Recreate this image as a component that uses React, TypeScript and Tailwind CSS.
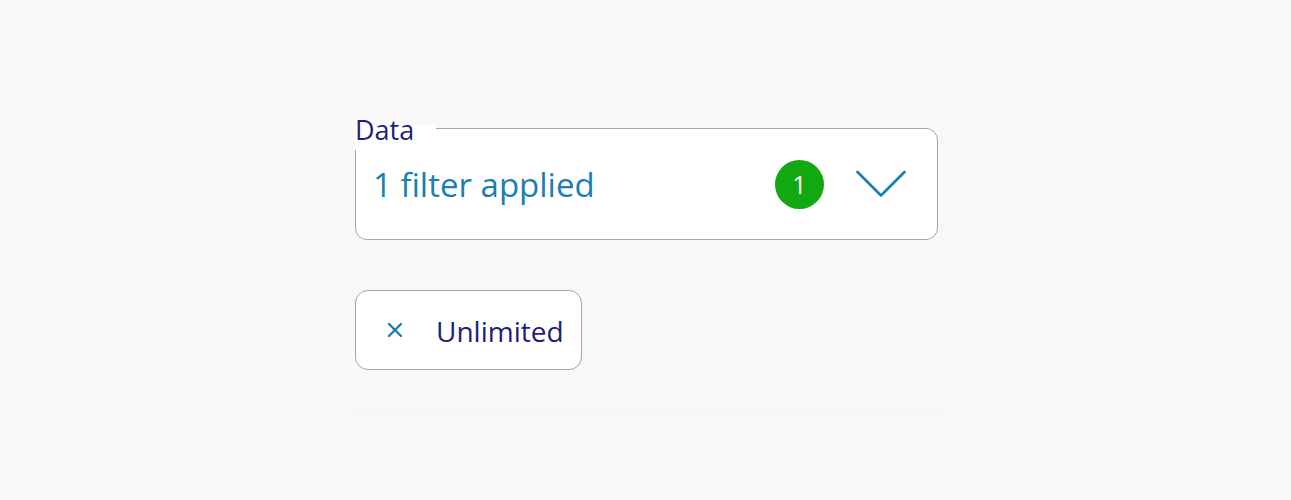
import React from "react";

export default function App() {
  return (
    <div className="min-h-[500px] w-full bg-[#f8f8f8] pt-[128px] pl-[355px]" style={{ fontFamily: '"Open Sans", "Noto Sans", sans-serif' }}>
      <div className="flex w-[590px] flex-col pb-[40px] shadow-[0_3px_3px_rgba(0,0,0,0.01)] -ml-[5px] pl-[5px]">
        <div className="relative flex h-[112px] w-[583px] items-center rounded-[12px] border border-[#a4a4a4] bg-white pl-[17px] pr-[31px]">
          <div className="absolute left-[-1px] top-[-4px] h-[25px] w-[81px] bg-white" />
          <span className="absolute left-[-1px] top-[-13px] text-[27px] leading-[27px] text-[#1d1d7c]">Data</span>
          <span className="flex-1 text-[33px] leading-[33px] text-[#1b7fb0]">1 filter applied</span>
          <div className="flex h-[49px] w-[49px] items-center justify-center rounded-full bg-[#12a812] text-[25px] leading-none text-white">1</div>
          <svg className="ml-[32px]" width="50" height="28" viewBox="0 0 50 28" fill="none">
            <polyline points="1.5,2 25,25.5 48.5,2" stroke="#1b7fb0" strokeWidth="2.6" strokeLinecap="round" strokeLinejoin="round" />
          </svg>
        </div>
        <div className="mt-[50px] flex h-[80px] w-[227px] items-center rounded-[13px] border border-[#a4a4a4] bg-white pl-[31px]">
          <svg width="16" height="16" viewBox="0 0 16 16" fill="none">
            <path d="M2 2L14 14M14 2L2 14" stroke="#1b7fb0" strokeWidth="2.4" strokeLinecap="round" />
          </svg>
          <span className="ml-[33px] pt-[2px] text-[28px] leading-[28px] text-[#1d1d7c]">Unlimited</span>
        </div>
      </div>
    </div>
  );
}
